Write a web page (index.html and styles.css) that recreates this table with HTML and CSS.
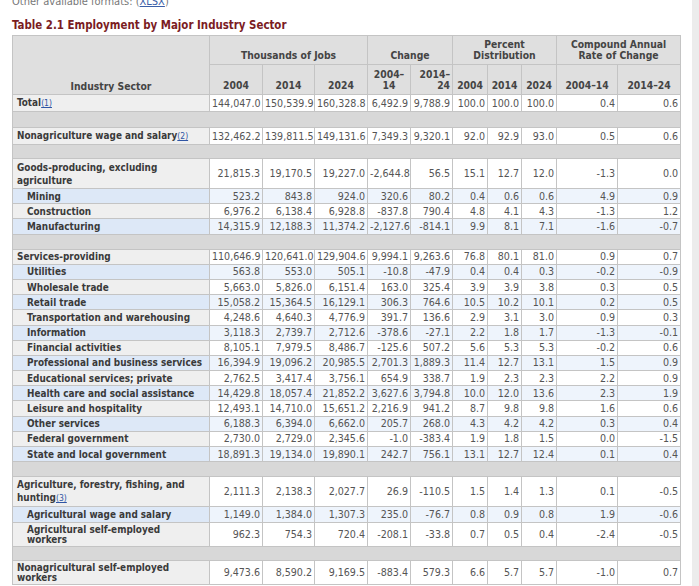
FILE: index.html
```html
<!DOCTYPE html>
<html lang="en">
<head>
<meta charset="utf-8">
<title>Table 2.1 Employment by Major Industry Sector</title>
<link rel="stylesheet" href="styles.css">
</head>
<body>
<div class="page">
  <main class="content">
    <p class="formats">Other available formats: (<a href="#">XLSX</a>)</p>
    <h2 class="title">Table 2.1 Employment by Major Industry Sector</h2>
    <table class="emp">
      <colgroup>
        <col class="c-stub"><col class="c-a"><col class="c-b"><col class="c-a">
        <col class="c-c1"><col class="c-c2"><col class="c-p1"><col class="c-p2"><col class="c-p1">
        <col class="c-r1"><col class="c-r2">
      </colgroup>
      <thead>
        <tr class="h1">
          <th rowspan="2" class="stubhead">Industry Sector</th>
          <th colspan="3">Thousands of Jobs</th>
          <th colspan="2">Change</th>
          <th colspan="3">Percent<br>Distribution</th>
          <th colspan="2">Compound Annual<br>Rate of Change</th>
        </tr>
        <tr class="h2">
          <th>2004</th><th>2014</th><th>2024</th>
          <th>2004–<br>14</th><th class="rt">2014–<br>24</th>
          <th>2004</th><th>2014</th><th>2024</th>
          <th>2004–14</th><th>2014–24</th>
        </tr>
      </thead>
      <tbody>
        <tr class="r tall1">
          <th>Total<a class="fn" href="#">(1)</a></th>
          <td>144,047.0</td><td>150,539.9</td><td>160,328.8</td><td>6,492.9</td><td>9,788.9</td><td>100.0</td><td>100.0</td><td>100.0</td><td>0.4</td><td>0.6</td>
        </tr>
        <tr class="sp sp16"><td colspan="11"></td></tr>
        <tr class="r tall1">
          <th>Nonagriculture wage and salary<a class="fn" href="#">(2)</a></th>
          <td>132,462.2</td><td>139,811.5</td><td>149,131.6</td><td>7,349.3</td><td>9,320.1</td><td>92.0</td><td>92.9</td><td>93.0</td><td>0.5</td><td>0.6</td>
        </tr>
        <tr class="sp sp14"><td colspan="11"></td></tr>
        <tr class="r two">
          <th>Goods-producing, excluding<br>agriculture</th>
          <td>21,815.3</td><td>19,170.5</td><td>19,227.0</td><td>-2,644.8</td><td>56.5</td><td>15.1</td><td>12.7</td><td>12.0</td><td>-1.3</td><td>0.0</td>
        </tr>
        <tr class="r alt">
          <th class="sub">Mining</th>
          <td>523.2</td><td>843.8</td><td>924.0</td><td>320.6</td><td>80.2</td><td>0.4</td><td>0.6</td><td>0.6</td><td>4.9</td><td>0.9</td>
        </tr>
        <tr class="r">
          <th class="sub">Construction</th>
          <td>6,976.2</td><td>6,138.4</td><td>6,928.8</td><td>-837.8</td><td>790.4</td><td>4.8</td><td>4.1</td><td>4.3</td><td>-1.3</td><td>1.2</td>
        </tr>
        <tr class="r alt">
          <th class="sub">Manufacturing</th>
          <td>14,315.9</td><td>12,188.3</td><td>11,374.2</td><td>-2,127.6</td><td>-814.1</td><td>9.9</td><td>8.1</td><td>7.1</td><td>-1.6</td><td>-0.7</td>
        </tr>
        <tr class="sp sp15"><td colspan="11"></td></tr>
        <tr class="r">
          <th>Services-providing</th>
          <td>110,646.9</td><td>120,641.0</td><td>129,904.6</td><td>9,994.1</td><td>9,263.6</td><td>76.8</td><td>80.1</td><td>81.0</td><td>0.9</td><td>0.7</td>
        </tr>
        <tr class="r alt">
          <th class="sub">Utilities</th>
          <td>563.8</td><td>553.0</td><td>505.1</td><td>-10.8</td><td>-47.9</td><td>0.4</td><td>0.4</td><td>0.3</td><td>-0.2</td><td>-0.9</td>
        </tr>
        <tr class="r">
          <th class="sub">Wholesale trade</th>
          <td>5,663.0</td><td>5,826.0</td><td>6,151.4</td><td>163.0</td><td>325.4</td><td>3.9</td><td>3.9</td><td>3.8</td><td>0.3</td><td>0.5</td>
        </tr>
        <tr class="r alt">
          <th class="sub">Retail trade</th>
          <td>15,058.2</td><td>15,364.5</td><td>16,129.1</td><td>306.3</td><td>764.6</td><td>10.5</td><td>10.2</td><td>10.1</td><td>0.2</td><td>0.5</td>
        </tr>
        <tr class="r">
          <th class="sub">Transportation and warehousing</th>
          <td>4,248.6</td><td>4,640.3</td><td>4,776.9</td><td>391.7</td><td>136.6</td><td>2.9</td><td>3.1</td><td>3.0</td><td>0.9</td><td>0.3</td>
        </tr>
        <tr class="r alt">
          <th class="sub">Information</th>
          <td>3,118.3</td><td>2,739.7</td><td>2,712.6</td><td>-378.6</td><td>-27.1</td><td>2.2</td><td>1.8</td><td>1.7</td><td>-1.3</td><td>-0.1</td>
        </tr>
        <tr class="r">
          <th class="sub">Financial activities</th>
          <td>8,105.1</td><td>7,979.5</td><td>8,486.7</td><td>-125.6</td><td>507.2</td><td>5.6</td><td>5.3</td><td>5.3</td><td>-0.2</td><td>0.6</td>
        </tr>
        <tr class="r alt">
          <th class="sub">Professional and business services</th>
          <td>16,394.9</td><td>19,096.2</td><td>20,985.5</td><td>2,701.3</td><td>1,889.3</td><td>11.4</td><td>12.7</td><td>13.1</td><td>1.5</td><td>0.9</td>
        </tr>
        <tr class="r">
          <th class="sub">Educational services; private</th>
          <td>2,762.5</td><td>3,417.4</td><td>3,756.1</td><td>654.9</td><td>338.7</td><td>1.9</td><td>2.3</td><td>2.3</td><td>2.2</td><td>0.9</td>
        </tr>
        <tr class="r alt">
          <th class="sub">Health care and social assistance</th>
          <td>14,429.8</td><td>18,057.4</td><td>21,852.2</td><td>3,627.6</td><td>3,794.8</td><td>10.0</td><td>12.0</td><td>13.6</td><td>2.3</td><td>1.9</td>
        </tr>
        <tr class="r">
          <th class="sub">Leisure and hospitality</th>
          <td>12,493.1</td><td>14,710.0</td><td>15,651.2</td><td>2,216.9</td><td>941.2</td><td>8.7</td><td>9.8</td><td>9.8</td><td>1.6</td><td>0.6</td>
        </tr>
        <tr class="r alt">
          <th class="sub">Other services</th>
          <td>6,188.3</td><td>6,394.0</td><td>6,662.0</td><td>205.7</td><td>268.0</td><td>4.3</td><td>4.2</td><td>4.2</td><td>0.3</td><td>0.4</td>
        </tr>
        <tr class="r">
          <th class="sub">Federal government</th>
          <td>2,730.0</td><td>2,729.0</td><td>2,345.6</td><td>-1.0</td><td>-383.4</td><td>1.9</td><td>1.8</td><td>1.5</td><td>0.0</td><td>-1.5</td>
        </tr>
        <tr class="r alt">
          <th class="sub">State and local government</th>
          <td>18,891.3</td><td>19,134.0</td><td>19,890.1</td><td>242.7</td><td>756.1</td><td>13.1</td><td>12.7</td><td>12.4</td><td>0.1</td><td>0.4</td>
        </tr>
        <tr class="sp sp15"><td colspan="11"></td></tr>
        <tr class="r two">
          <th>Agriculture, forestry, fishing, and<br>hunting<a class="fn" href="#">(3)</a></th>
          <td>2,111.3</td><td>2,138.3</td><td>2,027.7</td><td>26.9</td><td>-110.5</td><td>1.5</td><td>1.4</td><td>1.3</td><td>0.1</td><td>-0.5</td>
        </tr>
        <tr class="r alt tall16">
          <th class="sub">Agricultural wage and salary</th>
          <td>1,149.0</td><td>1,384.0</td><td>1,307.3</td><td>235.0</td><td>-76.7</td><td>0.8</td><td>0.9</td><td>0.8</td><td>1.9</td><td>-0.6</td>
        </tr>
        <tr class="r tight">
          <th class="sub">Agricultural self-employed<br>workers</th>
          <td>962.3</td><td>754.3</td><td>720.4</td><td>-208.1</td><td>-33.8</td><td>0.7</td><td>0.5</td><td>0.4</td><td>-2.4</td><td>-0.5</td>
        </tr>
        <tr class="sp sp14"><td colspan="11"></td></tr>
        <tr class="r tight">
          <th>Nonagricultural self-employed<br>workers</th>
          <td>9,473.6</td><td>8,590.2</td><td>9,169.5</td><td>-883.4</td><td>579.3</td><td>6.6</td><td>5.7</td><td>5.7</td><td>-1.0</td><td>0.7</td>
        </tr>
      </tbody>
    </table>
  </main>
  <aside class="side"></aside>
</div>
</body>
</html>
```

FILE: styles.css
```css
html, body {
  margin: 0;
  padding: 0;
  background: #ffffff;
}

body {
  font-family: "DejaVu Sans Condensed", "DejaVu Sans", Verdana, sans-serif;
  color: #444;
}

.page {
  display: flex;
  gap: 12px;
  height: 586px;
  overflow: hidden;
}

.content {
  width: 680px;
  padding-left: 12px;
  box-sizing: border-box;
}

.side {
  width: 7px;
  background: #ececec;
}

.formats {
  margin: -5px 0 0 0;
  font-size: 11px;
  line-height: 13px;
  color: #777;
}

.formats a {
  color: #3b5fa8;
}

.title {
  margin: 10px 0 3px 0;
  font-size: 11.4px;
  line-height: 14px;
  font-weight: bold;
  color: #7b1c1f;
}

.emp {
  border-collapse: collapse;
  table-layout: fixed;
  width: 668px;
  font-size: 10.6px;
}

.c-stub { width: 197px; }
.c-a { width: 53px; }
.c-b { width: 52px; }
.c-c1 { width: 43px; }
.c-c2 { width: 42px; }
.c-p1 { width: 35px; }
.c-p2 { width: 34px; }
.c-r1 { width: 61px; }
.c-r2 { width: 63px; }

.emp th,
.emp td {
  border: 1px solid #c4c4c4;
  padding: 0 2px;
  overflow: hidden;
  white-space: nowrap;
}

.emp thead th {
  background: #dfdfdf;
  color: #444;
  font-weight: bold;
  text-align: center;
  vertical-align: bottom;
  line-height: 11px;
  padding-bottom: 3px;
  font-size: 10.3px;
}

.emp thead .stubhead {
  padding-bottom: 2px;
}

.emp thead th.rt {
  text-align: right;
}

.emp .h1 { height: 29px; }
.emp .h2 { height: 30px; }

.emp tbody th {
  text-align: left;
  font-weight: bold;
  font-size: 9.9px;
  color: #3a3a3a;
  background: #efefef;
  padding-left: 4px;
  line-height: 13px;
}

.emp tbody th.sub {
  padding-left: 14px;
}

.emp tbody td {
  text-align: right;
  color: #555;
  background: #ffffff;
  line-height: 13px;
  vertical-align: middle;
}

.emp tr.r { height: 15.2px; }
.emp tr.tall1 { height: 17px; }
.emp tr.tall16 { height: 16px; }
.emp tr.two { height: 30px; }
.emp tr.tight { height: 24px; }
.emp tr.tight th { line-height: 10px; }

.emp tr.alt th { background: #dde8f7; }
.emp tr.alt td { background: #eef4fc; }

.emp tr.sp td {
  background: #d8d8d8;
  padding: 0;
}
.emp tr.sp14 { height: 14px; }
.emp tr.sp15 { height: 15px; }
.emp tr.sp16 { height: 16px; }

.fn {
  font-size: 8.5px;
  font-weight: normal;
  color: #2f55a4;
  text-decoration: underline;
}
```
